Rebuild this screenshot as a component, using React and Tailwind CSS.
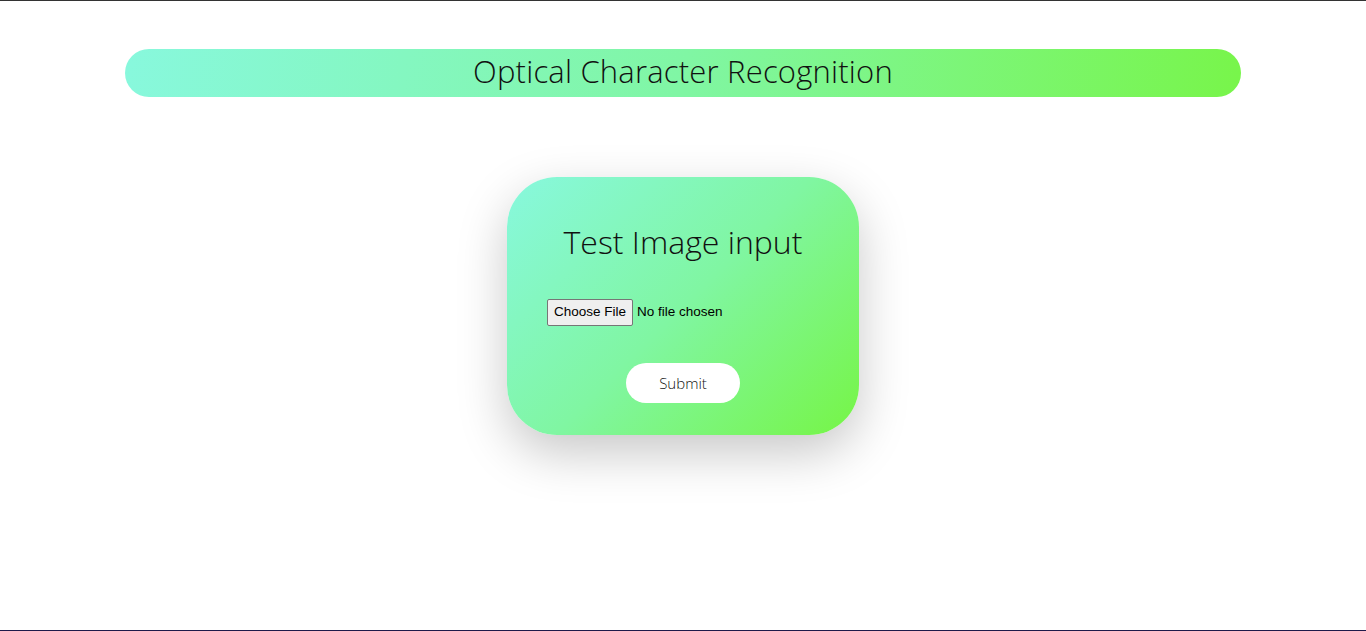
export default function App() {
  return (
    <div className="min-h-[631px] w-full bg-white border-t border-[#333] border-b border-b-[#1e1a4a] flex flex-col items-center" style={{ fontFamily: '"Open Sans", "Liberation Sans", sans-serif' }}>
      <div className="mt-[48px] w-[1116px] h-[48px] rounded-full bg-[linear-gradient(100deg,#88f8dd_0%,#80f6a4_50%,#78f54a_100%)] flex items-center justify-center">
        <h1 className="text-[31px] font-light text-[#111] leading-none tracking-[0.2px] -mt-[3px]">Optical Character Recognition</h1>
      </div>
      <div className="mt-[80px] w-[352px] h-[258px] rounded-[50px] bg-[linear-gradient(135deg,#88f8de_0%,#80f6a2_50%,#76f545_100%)] shadow-[0_18px_50px_rgba(0,0,0,0.22)] flex flex-col items-center">
        <h2 className="mt-[49px] text-[32px] font-light text-[#111] leading-none">Test Image input</h2>
        <div className="mt-[42px] self-start ml-[40px] h-[25px] flex items-center">
          <input type="file" className="text-[13.5px] text-black [&::file-selector-button]:px-[6px] [&::file-selector-button]:py-[2px] [&::file-selector-button]:bg-[#efefef] [&::file-selector-button]:border [&::file-selector-button]:border-[#767676] [&::file-selector-button]:rounded-[2px] [&::file-selector-button]:mr-[4px] [&::file-selector-button]:text-black" style={{ fontFamily: '"Liberation Sans", Arial, sans-serif' }} />
        </div>
        <button className="mt-[38px] w-[114px] h-[40px] rounded-full bg-white text-[15px] font-light text-[#111]">Submit</button>
      </div>
    </div>
  );
}
